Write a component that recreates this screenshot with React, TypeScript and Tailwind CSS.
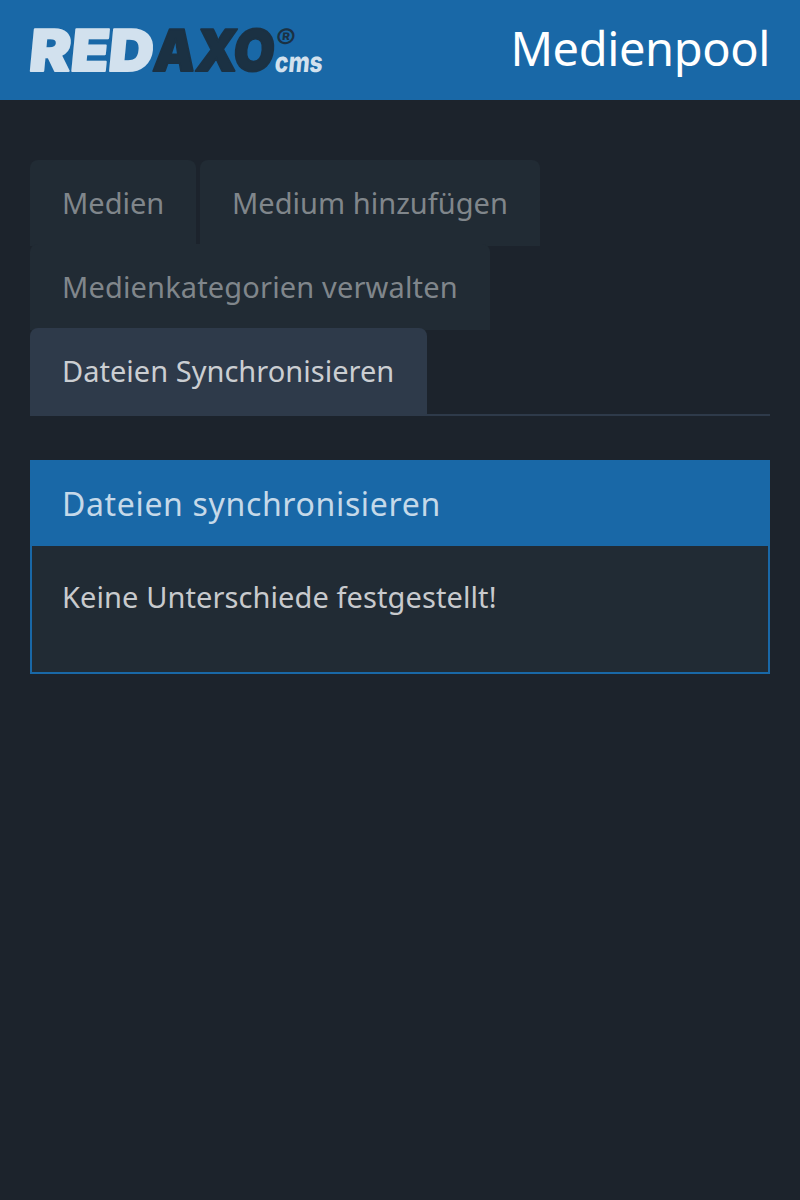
import clsx from 'clsx';

const tabs = [
  { label: 'Medien', size: 'w-[166px]' },
  { label: 'Medium hinzufügen', size: 'w-[340px] tracking-[0.03px]' },
  { label: 'Medienkategorien verwalten', size: 'w-[460px] tracking-[0.15px]' },
  { label: 'Dateien Synchronisieren', size: 'w-[397px] tracking-[0.02px]', active: true },
];

function Logo() {
  return (
    <svg width="330" height="100" viewBox="-20 0 330 100" className="block" aria-label="REDAXO CMS">
      <g fontFamily="Inter, sans-serif" transform="translate(0 72) skewX(-5.5)">
        <g fontSize="57.5" fontWeight="900" strokeWidth="2" strokeLinejoin="round">
          <text x="-2" y="-1" textLength="124" lengthAdjust="spacingAndGlyphs" fill="#d2e1ee" stroke="#d2e1ee">RED</text>
          <text x="122" y="-1" textLength="121" lengthAdjust="spacingAndGlyphs" fill="#1b3143" stroke="#1b3143">AXO</text>
        </g>
        <text x="244" y="0" fontSize="28" fontWeight="800" textLength="48" lengthAdjust="spacingAndGlyphs" fill="#d2e1ee">cms</text>
        <text x="242.5" y="-23" fontSize="28" fontWeight="700" textLength="20" lengthAdjust="spacingAndGlyphs" fill="#1b3143">®</text>
      </g>
    </svg>
  );
}

export default function App() {
  return (
    <div className="min-h-[1200px] w-full bg-[#1c232c] font-['Noto_Sans',sans-serif]">
      <header className="flex h-[100px] items-start justify-between bg-[#1968a7] pl-[10px] pr-[30px]">
        <Logo />
        <h1 className="pt-4 text-[47px] leading-[64px] tracking-[-0.4px] text-white">Medienpool</h1>
      </header>
      <main className="px-[30px] pt-[60px]">
        <nav className="flex h-[256px] flex-wrap content-start gap-x-1 border-b-2 border-[#2e3a4a]">
          {tabs.map((tab) => (
            <a
              key={tab.label}
              className={clsx(
                'mb-[-2px] h-[86px] rounded-t-lg pl-8 pt-[22px] text-[29px] leading-[42px] whitespace-nowrap',
                tab.size,
                tab.active ? 'bg-[#2e3a4a] text-[#cbced2]' : 'bg-[#212b34] text-[#80868b]',
              )}
            >
              {tab.label}
            </a>
          ))}
        </nav>
        <section className="mt-11 h-[214px] border-2 border-[#1968a7] bg-[#212b34]">
          <h2 className="h-[84px] bg-[#1968a7] pl-[30px] pt-[18px] text-[32px] leading-[48px] tracking-[0.65px] text-[#c5d9e9]">
            Dateien synchronisieren
          </h2>
          <p className="pl-[30px] pt-[30px] text-[29px] leading-[42px] tracking-[0.09px] text-[#c8cacd]">
            Keine Unterschiede festgestellt!
          </p>
        </section>
      </main>
    </div>
  );
}
